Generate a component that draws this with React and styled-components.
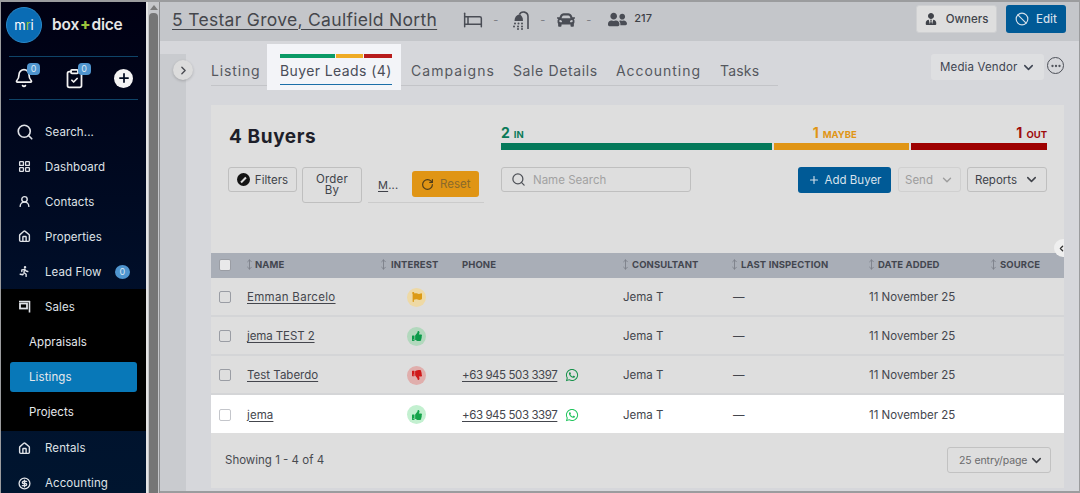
import React from "react";
import styled, { createGlobalStyle } from "styled-components";
import {
  Bell, ClipboardCheck, Search, LayoutGrid, UserRound, House, ChevronRight, ChevronLeft, ChevronDown,
  Ban, Ellipsis, Plus, RotateCw, MoveVertical, Bed, CircleDollarSign,
} from "lucide-react";
import { FaThumbsUp, FaThumbsDown, FaFlag, FaCar, FaUserFriends, FaWhatsapp, FaUserTie } from "react-icons/fa";
import { TbRun } from "react-icons/tb";

const FONT = `"Inter", "Open Sans", "Liberation Sans", sans-serif`;

const Global = createGlobalStyle`
  html, body { margin: 0; padding: 0; background: #d6d7db; }
  body { font-family: ${FONT}; overflow: hidden; }
  * { box-sizing: border-box; }
`;

const Frame = styled.div`
  width: 1080px; height: 493px; display: flex; overflow: hidden; position: relative;
  border-top: 2px solid #9b9c9e; border-left: 1px solid #9b9c9e; border-right: 1px solid #9b9c9e;
  background: #d6d7db;
`;

/* Sidebar */
const Sidebar = styled.aside`
  width: 145px; flex: none; height: 491px; color: #e8eaee; display: flex; flex-direction: column; overflow: hidden;
  background: linear-gradient(180deg, #000012 0%, #000f2a 60%, #00152f 100%);
`;
const Brand = styled.div`
  height: 54px; flex: none; margin: 0 8px 0 5px; padding-bottom: 9px; display: flex; align-items: center; gap: 10px;
  font-size: 15.5px; font-weight: 600; color: #e6e6e6; letter-spacing: -0.2px;
`;
const Logo = styled.div`
  width: 36px; height: 36px; border-radius: 50%; background: #0a6cb4; border: 1px solid #2a88c8; display: flex;
  align-items: center; justify-content: center; color: #fff; font-size: 13px; font-weight: 400; letter-spacing: 0;
  & span { color: #9ac63c; }
`;
const BrandPlus = styled.span` color: #9ac63c; font-weight: 800; margin: 0 1px; `;
const QuickBar = styled.div`
  height: 44px; flex: none; margin: 0 8px; border-top: 1px solid #0f4468; border-bottom: 1px solid #0f4468;
  display: flex; align-items: center; justify-content: space-between; padding: 0 5px;
`;
const QuickIcon = styled.div` position: relative; display: flex; color: #f2f2f2; `;
const TinyBadge = styled.span`
  position: absolute; top: -5px; right: -6px; width: 13px; height: 12px; border-radius: 4px; background: #4f95cf;
  font-size: 9px; line-height: 12px; text-align: center; color: #dbe8f3;
`;
const AddCircle = styled.div`
  width: 19px; height: 19px; border-radius: 50%; background: #f4f4f4; color: #000b20;
  display: flex; align-items: center; justify-content: center;
`;
const NavList = styled.nav` display: flex; flex: none; flex-direction: column; margin-top: 14px; `;
const NavItem = styled.div`
  height: 35px; flex: none; display: flex; align-items: center; padding-left: ${p => (p.$big ? 15 : 17)}px; gap: ${p => (p.$big ? 11 : 14)}px;
  font-size: 11.5px; letter-spacing: 0.1px; color: #dfe2e7; position: relative;
  background: ${p => (p.$dark ? "#000" : "transparent")};
`;
const NavGroup = styled.div` background: #000; display: flex; flex: none; flex-direction: column; padding-bottom: 1.5px; `;
const SubItem = styled.div`
  height: 30px; flex: none; margin: 2.5px 9px; padding-left: 19px; border-radius: 3px; display: flex; align-items: center;
  font-size: 11.5px; letter-spacing: 0.1px; color: #e6e8ec; background: ${p => (p.$active ? "#0878b8" : "transparent")};
`;
const CountPill = styled.span`
  position: absolute; right: 16px; width: 15px; height: 14px; border-radius: 50%; background: #4f95cf; color: #d8e6f1;
  font-size: 9px; text-align: center; line-height: 14px;
`;

const ScrollTrack = styled.div`
  width: 14px; flex: none; border-left: 2px solid #e4e4e4; border-right: 1px solid #8b8c8e; background: #c6c7ca;
  display: flex; flex-direction: column; align-items: center; padding-top: 3px; gap: 3px; height: 491px;
`;
const ScrollUp = styled.div`
  width: 0; height: 0; border-left: 4px solid transparent; border-right: 4px solid transparent; border-bottom: 5px solid #7a7a7a;
`;
const ScrollThumb = styled.div` width: 9px; flex: 1; background: #767676; border-radius: 4px 4px 0 0; `;

/* Main */
const Main = styled.main` flex: 1; min-width: 0; display: flex; flex-direction: column; height: 491px; border-bottom: 2px solid #9b9c9e; `;
const Header = styled.header`
  height: 39px; flex: none; background: #c4c6ca; display: flex; align-items: center; padding: 0 13px 0 12px; position: relative;
`;
const Title = styled.h1`
  margin: 0 26px 5px 0; font-size: 17.5px; font-weight: 400; color: #45474c; text-decoration: underline; text-underline-offset: 3px;
  text-decoration-thickness: 1px; letter-spacing: 0.3px; white-space: nowrap;
`;
const Facts = styled.div` display: flex; align-items: center; color: #4a4d55; margin-bottom: 4px; `;
const Dash = styled.span` font-size: 11px; color: #7b7d83; margin: 0 ${p => p.$mr ?? 14}px 0 ${p => p.$ml ?? 10}px; `;
const FactNum = styled.span` font-size: 11px; color: #3e4046; margin-left: 7px; font-weight: 500; margin-bottom: 3px; `;
const HeaderActions = styled.div` margin-left: auto; display: flex; gap: 9px; margin-top: -5px; `;
const OwnerBtn = styled.button`
  height: 28px; width: 81px; border: 1px solid #cfd0d2; border-radius: 3px; background: #dedede; color: #40434a;
  font: 500 11.5px ${FONT}; display: flex; align-items: center; justify-content: center; gap: 9px; padding: 0;
`;
const EditBtn = styled.button`
  height: 28px; width: 60px; border: 0; border-radius: 3px; background: #005a96; color: #d2dfe9;
  font: 500 11.5px ${FONT}; display: flex; align-items: center; justify-content: center; gap: 7px; padding: 0;
`;

const Body = styled.div` flex: 1; display: flex; position: relative; min-height: 0; `;
const Rail = styled.div` width: 26px; flex: none; margin-top: 13px; background: #c9cbcf; `;
const RailToggle = styled.div`
  position: absolute; left: 13px; top: 19px; width: 20px; height: 20px; border-radius: 50%; background: #dcdcdc; color: #4a4c52;
  display: flex; align-items: center; justify-content: center; box-shadow: 0 1px 3px rgba(0,0,0,.2);
`;
const Content = styled.div` flex: 1; min-width: 0; padding: 3px 15px 0 25px; display: flex; flex-direction: column; `;
const TabBar = styled.div` display: flex; align-items: flex-start; height: 46px; flex: none; position: relative; `;
const Tabs = styled.div`
  display: flex; width: 567px; height: 42px; border-bottom: 1px solid #c3c4c8; align-items: stretch;
`;
const Tab = styled.div`
  flex: none; width: ${p => p.$w}px; margin-left: ${p => p.$ml || 0}px; font-size: 14px; color: #55575e; letter-spacing: ${p => p.$ls}px;
  padding-top: 19px; white-space: nowrap; line-height: 16px;
`;
const ActiveTab = styled.div`
  flex: none; width: 134px; height: 46px; background: #f3f4f8; padding: 10px 9px 0 13px; display: flex; flex-direction: column;
  font-size: 14px; color: #4a4d58; letter-spacing: 0.4px; white-space: nowrap; line-height: 16px;
`;
const ScoreBar = styled.div` display: flex; gap: 1px; height: 4px; margin-bottom: 5px; flex: none; `;
const ScoreSeg = styled.i` display: block; height: 4px; flex: ${p => p.$f}; background: ${p => p.$c}; `;
const TabLabel = styled.div` height: 22px; border-bottom: 1.5px solid #1a6ea8; `;
const VendorWrap = styled.div` margin-left: auto; display: flex; gap: 3px; padding-top: 10px; `;
const VendorSel = styled.div`
  width: 113px; height: 26px; border-radius: 3px; background: #dedfe1; color: #3e4552; font-size: 11.5px; display: flex;
  align-items: center; justify-content: space-between; padding: 0 8px 0 9px; white-space: nowrap; letter-spacing: 0.15px;
`;
const MoreIcon = styled.div`
  width: 17px; height: 17px; border-radius: 50%; border: 1.3px solid #4d5058; color: #4d5058; display: flex; align-items: center; justify-content: center;
  margin: 3px 0 0 0;
`;

const Card = styled.section` flex: none; margin-top: 15px; height: 383px; background: #dedede; display: flex; flex-direction: column; position: relative; overflow: hidden; `;
const CardHead = styled.div` height: 148px; flex: none; padding: 20px 17px 0 18px; display: flex; `;
const HeadLeft = styled.div` width: 272px; flex: none; display: flex; flex-direction: column; `;
const Heading = styled.h2` margin: 0; height: 42px; padding-top: 1px; font-size: 19px; font-weight: 700; color: #1e1f2a; line-height: 22px; letter-spacing: 0.6px; `;
const FilterRow = styled.div` display: flex; align-items: flex-start; `;
const Btn = styled.button`
  height: 25px; border: 1px solid #bfbfbf; border-radius: 3px; background: #dedede; color: #40434a; padding: 0;
  font: 400 11.5px ${FONT}; display: flex; align-items: center; justify-content: center; gap: 4px;
`;
const FilterBtn = styled(Btn)` width: 69px; margin-left: -1px; `;
const FilterDot = styled.span`
  width: 13px; height: 13px; border-radius: 50%; background: #141414; position: relative; flex: none; margin-right: 1px;
  &::after { content: ""; position: absolute; left: 3px; top: 5.5px; width: 7px; height: 2px; background: #dedede; transform: rotate(-45deg); }
`;
const OrderBtn = styled(Btn)` width: 60px; height: 36px; margin-left: 5px; line-height: 11px; flex-wrap: wrap; padding: 0 14px; letter-spacing: .2px; `;
const Saved = styled.div`
  width: 116px; height: 36px; margin-left: 6px; border-bottom: 1px solid #cbcbcb; display: flex; align-items: flex-start; gap: 14px; padding: 4px 0 0 10px;
`;
const SavedLink = styled.span` font-size: 11px; color: #3f4148; margin-top: 7px; letter-spacing: 0.2px; & u { text-underline-offset: 2px; } `;
const ResetBtn = styled.button`
  width: 67px; height: 26px; border: 0; border-radius: 3px; background: #e09515; color: #8a6a2b; padding: 0; font: 400 11.5px ${FONT};
  display: flex; align-items: center; justify-content: center; gap: 6px;
  & svg { color: #4f3d1a; }
`;
const HeadRight = styled.div` flex: 1; min-width: 0; display: flex; flex-direction: column; `;
const Counts = styled.div` display: flex; height: 18px; font-weight: 700; align-items: flex-end; `;
const Count = styled.div`
  flex: ${p => p.$f}; font-size: 14px; line-height: 16px; color: ${p => p.$c}; text-align: ${p => p.$a}; padding-right: ${p => p.$pr || 0}px;
  & small { font-size: 9.5px; font-weight: 700; margin-left: 4px; }
`;
const Meter = styled.div` display: flex; gap: 2px; height: 7px; `;
const MeterSeg = styled.i` display: block; flex: ${p => p.$f}; background: ${p => p.$c}; `;
const ToolRow = styled.div` display: flex; margin-top: 17px; `;
const SearchBox = styled.div`
  width: 190px; height: 25px; border: 1px solid #bfbfbf; border-radius: 3px; display: flex; align-items: center; gap: 7px; padding-left: 9px;
  font-size: 11.5px; color: #a2a2a2; & svg { color: #4f5258; }
`;
const AddBtn = styled.button`
  margin-left: auto; width: 93px; height: 26px; border: 0; border-radius: 3px; background: #005a96; color: #d7e2ec; padding: 0;
  font: 400 11.5px ${FONT}; display: flex; align-items: center; justify-content: center; gap: 5px;
`;
const SendBtn = styled(Btn)` width: 63px; margin-left: 7px; color: #9d9d9d; border-color: #d0d0d0; gap: 7px; `;
const ReportBtn = styled(Btn)` width: 80px; margin-left: 6px; gap: 7px; `;

const COLS = "36px 132px 83px 161px 110px 136px 121px 1fr";
const HeadRow = styled.div`
  height: 25px; flex: none; background: #a9aeb7; display: grid; grid-template-columns: ${COLS}; align-items: center; padding-bottom: 2px;
  font-size: 9.5px; font-weight: 700; color: #43464f; letter-spacing: 0.1px;
`;
const HeadCell = styled.div` display: flex; align-items: center; gap: ${p => p.$gap ?? 1}px; white-space: nowrap; margin-left: ${p => p.$ml || 0}px; & svg { color: #7d818a; } `;
const Row = styled.div`
  height: ${p => (p.$hl ? 38 : 39)}px; flex: none; display: grid; grid-template-columns: ${COLS}; align-items: center;
  background: ${p => (p.$hl ? "#fff" : "transparent")}; border-bottom: ${p => (p.$hl ? "none" : "2px solid #d4d5d7")};
  font-size: 11.5px; color: #44464d; padding-top: 1px;
`;
const Check = styled.div`
  width: 12px; height: 12px; margin-left: 8px; border: 1px solid ${p => (p.$white ? "#c4c6cb" : "#9a9da4")}; border-radius: 2px; background: ${p => (p.$fill ? "#e9e9ea" : "transparent")};
`;
const NameLink = styled.a` color: #44464d; text-decoration: underline; text-underline-offset: 2px; letter-spacing: ${p => p.$ls ?? 0.1}px; `;
const Mood = styled.div`
  width: 19px; height: 19px; margin-left: 28px; border-radius: 50%; background: ${p => p.$bg}; color: ${p => p.$c}; display: flex; align-items: center; justify-content: center;
`;
const PhoneCell = styled.div` display: flex; align-items: center; gap: 8px; `;
const WaIcon = styled.span` display: flex; color: ${p => p.$c}; `;
const Footer = styled.div`
  flex: 1; margin-top: 2px; display: flex; align-items: center; justify-content: space-between; padding: 0 13px 3px 14px;
  font-size: 11.5px; color: #484a50;
`;
const PageSel = styled.div`
  width: 104px; height: 26px; border: 1px solid #c2c2c2; border-radius: 3px; font-size: 10.5px; color: #6a6a6c; display: flex; align-items: center; justify-content: space-between; padding: 0 6px 0 11px; white-space: nowrap; letter-spacing: -0.1px;
  & svg { color: #3e4046; }
`;
const EdgeToggle = styled.div`
  position: absolute; right: -8px; top: 134px; width: 18px; height: 18px; border-radius: 50%; background: #efefef; color: #333; display: flex; align-items: center; justify-content: flex-start; padding-left: 3px; z-index: 2;
`;

const Sort = () => <MoveVertical size={11} strokeWidth={2} />;
const Chev = ({ s = 15 }) => <ChevronDown size={s} strokeWidth={2.4} />;

const ShowerIcon = () => (
  <svg width="18" height="20" viewBox="0 0 18 20" fill="none" stroke="currentColor" strokeWidth="1.6">
    <path d="M16 19V6.5a4.5 4.5 0 0 0-8.6-1.8" />
    <path d="M2.5 11c0-3.6 2-5.8 4.5-6.4 2.4.3 4 2.6 4 6.4z" fill="currentColor" stroke="none" />
    <g fill="currentColor" stroke="none">
      <circle cx="3" cy="13.5" r="1" /><circle cx="6.5" cy="13.5" r="1" /><circle cx="10" cy="13.5" r="1" />
      <circle cx="2" cy="16.5" r="1" /><circle cx="6" cy="16.5" r="1" /><circle cx="10" cy="16.5" r="1" />
      <circle cx="6" cy="19" r="1" /><circle cx="10" cy="19" r="1" />
    </g>
  </svg>
);
const SaleSign = () => (
  <svg width="13" height="13" viewBox="0 0 13 13" fill="none" stroke="currentColor" strokeWidth="1.6">
    <path d="M1 1.5h11M11.5 1v11.5" />
    <rect x="2" y="3.5" width="7" height="5" strokeWidth="1.8" />
  </svg>
);

const ROWS = [
  { name: "Emman Barcelo", mood: "maybe", ls: 0.3 },
  { name: "jema TEST 2", mood: "in", ls: -0.1 },
  { name: "Test Taberdo", mood: "out", phone: true, ls: 0 },
  { name: "jema", mood: "in2", phone: true, hl: true },
];
const MOODS = {
  maybe: { bg: "#eed9a5", c: "#dc9a14", I: FaFlag },
  in: { bg: "#b2d8bd", c: "#0c9a4a", I: FaThumbsUp },
  in2: { bg: "#c3f0d0", c: "#16a34a", I: FaThumbsUp },
  out: { bg: "#e0aeac", c: "#d01818", I: FaThumbsDown },
};

export default function App() {
  return (
    <>
      <Global />
      <Frame>
        <Sidebar>
          <Brand>
            <Logo>m<span>r</span>i</Logo>
            <div>box<BrandPlus>+</BrandPlus>dice</div>
          </Brand>
          <QuickBar>
            <QuickIcon><Bell size={20} strokeWidth={2} /><TinyBadge>0</TinyBadge></QuickIcon>
            <QuickIcon><ClipboardCheck size={21} strokeWidth={2} /><TinyBadge>0</TinyBadge></QuickIcon>
            <AddCircle><Plus size={14} strokeWidth={3} /></AddCircle>
          </QuickBar>
          <NavList>
            <NavItem $big><Search size={18} strokeWidth={2.2} />Search...</NavItem>
            <NavItem><LayoutGrid size={13} strokeWidth={2.4} />Dashboard</NavItem>
            <NavItem><UserRound size={13} strokeWidth={2.6} />Contacts</NavItem>
            <NavItem><House size={13} strokeWidth={2.6} />Properties</NavItem>
            <NavItem><TbRun size={13} strokeWidth={2.6} />Lead Flow<CountPill>0</CountPill></NavItem>
            <NavGroup>
              <NavItem $dark><SaleSign />Sales</NavItem>
              <SubItem>Appraisals</SubItem>
              <SubItem $active>Listings</SubItem>
              <SubItem>Projects</SubItem>
            </NavGroup>
            <NavItem><House size={13} strokeWidth={2.6} />Rentals</NavItem>
            <NavItem><CircleDollarSign size={13} strokeWidth={2.4} />Accounting</NavItem>
          </NavList>
        </Sidebar>
        <ScrollTrack><ScrollUp /><ScrollThumb /></ScrollTrack>
        <Main>
          <Header>
            <Title>5 Testar Grove, Caulfield North</Title>
            <Facts>
              <Bed size={20} strokeWidth={1.8} /><Dash>-</Dash>
              <ShowerIcon /><Dash $mr={12}>-</Dash>
              <FaCar size={18} /><Dash $ml={11} $mr={17}>-</Dash>
              <FaUserFriends size={19} /><FactNum>217</FactNum>
            </Facts>
            <HeaderActions>
              <OwnerBtn><FaUserTie size={12} />Owners</OwnerBtn>
              <EditBtn><Ban size={14} strokeWidth={2} />Edit</EditBtn>
            </HeaderActions>
          </Header>
          <Body>
            <Rail />
            <RailToggle><ChevronRight size={13} strokeWidth={2.6} /></RailToggle>
            <Content>
              <TabBar>
                <Tabs>
                  <Tab $w={56} $ls={0.85}>Listing</Tab>
                  <ActiveTab>
                    <ScoreBar>
                      <ScoreSeg $f={55} $c="#0b9a66" />
                      <ScoreSeg $f={27} $c="#efab25" />
                      <ScoreSeg $f={28} $c="#b81c1c" />
                    </ScoreBar>
                    <TabLabel>Buyer Leads (4)</TabLabel>
                  </ActiveTab>
                  <Tab $w={102} $ml={10} $ls={1.05}>Campaigns</Tab>
                  <Tab $w={103} $ls={0.62}>Sale Details</Tab>
                  <Tab $w={104} $ls={0.95}>Accounting</Tab>
                  <Tab $w={50} $ls={0.2}>Tasks</Tab>
                </Tabs>
                <VendorWrap>
                  <VendorSel>Media Vendor<Chev /></VendorSel>
                  <MoreIcon><Ellipsis size={12} strokeWidth={2.6} /></MoreIcon>
                </VendorWrap>
              </TabBar>
              <Card>
                <CardHead>
                  <HeadLeft>
                    <Heading>4 Buyers</Heading>
                    <FilterRow>
                      <FilterBtn><FilterDot />Filters</FilterBtn>
                      <OrderBtn>Order By</OrderBtn>
                      <Saved>
                        <SavedLink><u>M</u>...</SavedLink>
                        <ResetBtn><RotateCw size={13} strokeWidth={2.2} />Reset</ResetBtn>
                      </Saved>
                    </FilterRow>
                  </HeadLeft>
                  <HeadRight>
                    <Counts>
                      <Count $f={272} $c="#0a7a58" $a="left">2<small>IN</small></Count>
                      <Count $f={136} $c="#e09515" $a="center" $pr={12}>1<small>MAYBE</small></Count>
                      <Count $f={136} $c="#9e0b0b" $a="right">1<small>OUT</small></Count>
                    </Counts>
                    <Meter>
                      <MeterSeg $f={271} $c="#04795a" />
                      <MeterSeg $f={136} $c="#e09515" />
                      <MeterSeg $f={136} $c="#9e0000" />
                    </Meter>
                    <ToolRow>
                      <SearchBox><Search size={15} strokeWidth={2} />Name Search</SearchBox>
                      <AddBtn><Plus size={12} strokeWidth={2.2} />Add Buyer</AddBtn>
                      <SendBtn>Send<Chev s={14} /></SendBtn>
                      <ReportBtn>Reports<Chev s={15} /></ReportBtn>
                    </ToolRow>
                  </HeadRight>
                </CardHead>
                <EdgeToggle><ChevronLeft size={9} strokeWidth={3.4} /></EdgeToggle>
                <HeadRow>
                  <Check $fill />
                  <HeadCell $ml={-3} $gap={0}><Sort />NAME</HeadCell>
                  <HeadCell $ml={-1} $gap={2}><Sort />INTEREST</HeadCell>
                  <HeadCell>PHONE</HeadCell>
                  <HeadCell $ml={-3}><Sort />CONSULTANT</HeadCell>
                  <HeadCell $ml={-4}><Sort />LAST INSPECTION</HeadCell>
                  <HeadCell $ml={-3}><Sort />DATE ADDED</HeadCell>
                  <HeadCell $ml={-2}><Sort />SOURCE</HeadCell>
                </HeadRow>
                {ROWS.map(r => {
                  const M = MOODS[r.mood];
                  return (
                    <Row key={r.name} $hl={r.hl}>
                      <Check $white={r.hl} />
                      <div><NameLink $ls={r.ls}>{r.name}</NameLink></div>
                      <div><Mood $bg={M.bg} $c={M.c}><M.I size={10} /></Mood></div>
                      <PhoneCell>
                        {r.phone && <NameLink $ls={-0.42}>+63 945 503 3397</NameLink>}
                        {r.phone && <WaIcon $c={r.hl ? "#22c55e" : "#16914a"}><FaWhatsapp size={14} /></WaIcon>}
                      </PhoneCell>
                      <div>Jema T</div>
                      <div>—</div>
                      <div>11 November 25</div>
                      <div />
                    </Row>
                  );
                })}
                <Footer>
                  <span>Showing 1 - 4 of 4</span>
                  <PageSel>25 entry/page<Chev s={15} /></PageSel>
                </Footer>
              </Card>
            </Content>
          </Body>
        </Main>
      </Frame>
    </>
  );
}
